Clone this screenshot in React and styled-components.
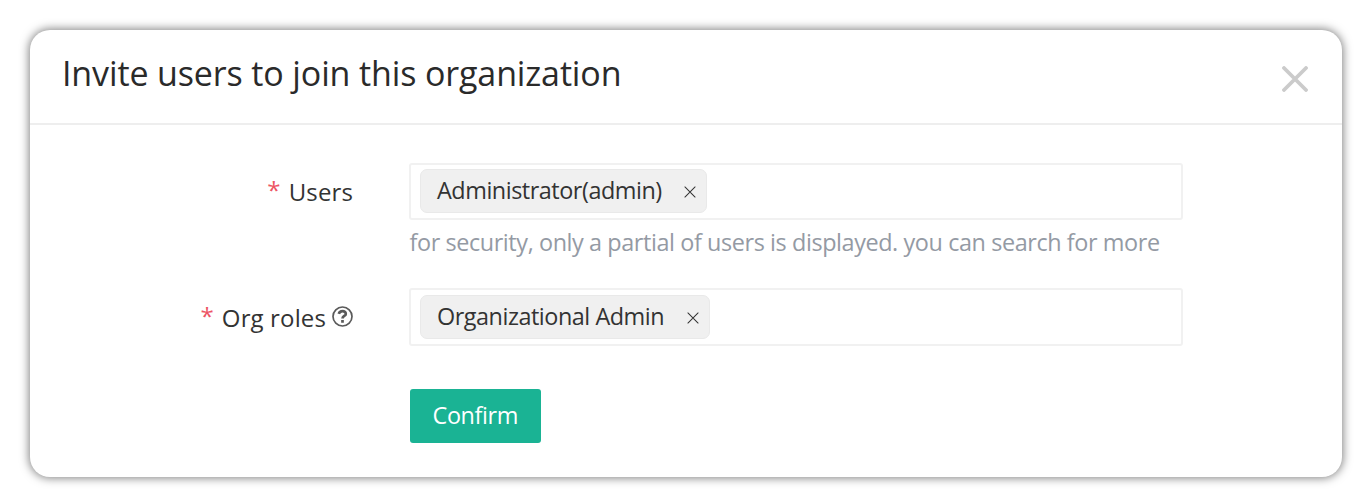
import React from 'react';
import styled, { createGlobalStyle } from 'styled-components';

const Global = createGlobalStyle`
  * { box-sizing: border-box; }
  body { margin: 0; background: #fff; font-family: "Open Sans", sans-serif; color: #333; }
`;
const Page = styled.div`
  height: 497px;
  padding: 30px 30px 20px;
`;
const Dialog = styled.section`
  width: 1312px;
  height: 447px;
  border-radius: 20px;
  background: #fff;
  box-shadow: 0 0 10px 1px rgba(0, 0, 0, 0.5);
`;
const Header = styled.header`
  display: flex;
  justify-content: space-between;
  height: 95px;
  padding: 19px 34.5px 0 32px;
  border-bottom: 2px solid #eee;
`;
const Title = styled.h1`
  margin: 0;
  font-size: 34px;
  line-height: 48px;
  letter-spacing: -0.13px;
  font-weight: 400;
  color: #2a2a2a;
  white-space: nowrap;
`;
const CloseButton = styled.button`
  display: flex;
  align-self: flex-start;
  margin-top: 17px;
  padding: 0;
  border: 0;
  background: none;
  color: #cbcbcb;
`;
const Form = styled.form`
  display: flex;
  flex-direction: column;
  padding: 38px 0 0;
`;
const Row = styled.div`
  display: grid;
  grid-template-columns: 323px 774px;
  column-gap: 56px;
  align-items: start;
  height: ${(p) => p.$height}px;
`;
const Label = styled.label`
  display: flex;
  justify-content: flex-end;
  align-items: center;
  height: 57px;
  padding-top: ${(p) => p.$drop || 0}px;
  font-size: 24px;
  letter-spacing: 0.13px;
  white-space: nowrap;
`;
const Required = styled.span`
  margin: 0 8px 4px 0;
  color: #ed5565;
`;
const Help = styled.svg`
  margin: 0 0 3px 6px;
`;
const Select = styled.div`
  display: flex;
  align-items: center;
  height: ${(p) => p.$height}px;
  padding: 0 0 1px 9px;
  border: 2px solid #f1f1f1;
  border-radius: 3px;
`;
const Tag = styled.span`
  display: flex;
  align-items: center;
  justify-content: space-between;
  width: ${(p) => p.$width}px;
  height: 44px;
  padding: 0 10.5px 2px 16px;
  border: 1px solid #e9e9e9;
  border-radius: 7px;
  background: #f0f0f0;
  font-size: 23.4px;
  letter-spacing: -0.46px;
  white-space: nowrap;

  svg { margin-top: 4px; }
`;
const Hint = styled.p`
  margin: 6px 0 0 0.5px;
  font-size: 23.4px;
  line-height: 32px;
  letter-spacing: -0.4px;
  color: #949aa4;
  white-space: nowrap;
`;
const Confirm = styled.button`
  width: 130.5px;
  height: 54px;
  margin-left: 1px;
  padding: 0 0 2px;
  border: 0;
  border-radius: 3px;
  background: #1ab394;
  color: #fff;
  font: 400 23.4px "Open Sans", sans-serif;
  letter-spacing: -0.4px;
`;
const Cross = ({ size, stroke }) => (
  <svg width={size} height={size} viewBox="0 0 26 26" fill="none" stroke="currentColor" strokeWidth={stroke} strokeLinecap="round">
    <path d="M2 2 24 24M24 2 2 24" />
  </svg>
);

export default function App() {
  return (
    <>
      <Global />
      <Page>
        <Dialog>
          <Header>
            <Title>Invite users to join this organization</Title>
            <CloseButton aria-label="Close"><Cross size={26} stroke={3.8} /></CloseButton>
          </Header>
          <Form>
            <Row $height={125}>
              <Label><Required>*</Required>Users</Label>
              <div>
                <Select $height={57}><Tag $width={287}>Administrator(admin)<Cross size={12} stroke={2.2} /></Tag></Select>
                <Hint>for security, only a partial of users is displayed. you can search for more</Hint>
              </div>
            </Row>
            <Row $height={101}>
              <Label $drop={2}>
                <Required>*</Required>Org roles
                <Help width="21" height="21" viewBox="0 0 21 21" fill="none" stroke="#5a5a5a" strokeWidth="1.7">
                  <circle cx="10.5" cy="10.5" r="9.5" />
                  <path d="M6.8 7.9C7.8 4.3 13.8 4.2 13.8 7.9C13.8 10 10.5 10 10.5 12.4M10.5 14V16.8" strokeWidth="2.7" />
                </Help>
              </Label>
              <Select $height={58}><Tag $width={290}>Organizational Admin<Cross size={12} stroke={2.2} /></Tag></Select>
            </Row>
            <Row $height={54}><span /><Confirm type="button">Confirm</Confirm></Row>
          </Form>
        </Dialog>
      </Page>
    </>
  );
}
